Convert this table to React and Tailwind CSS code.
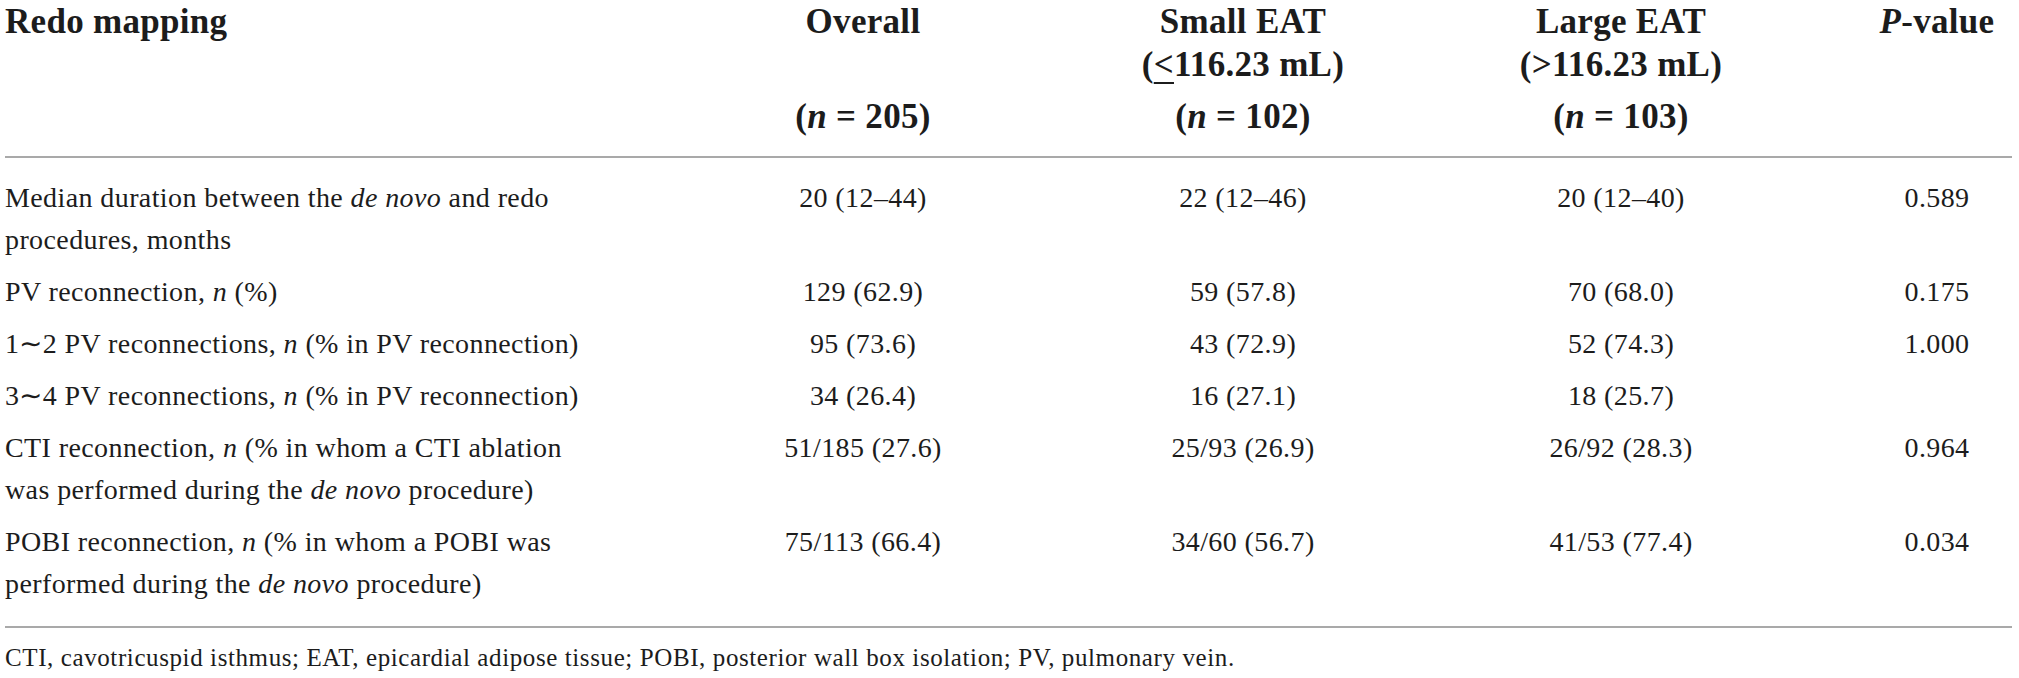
import React from 'react';

const COLS = 'grid grid-cols-[668px_380px_380px_376px_203px]';

const ROWS = [
  {
    label: (
      <>
        Median duration between the <i>de novo</i> and redo procedures, months
      </>
    ),
    values: ['20 (12–44)', '22 (12–46)', '20 (12–40)', '0.589'],
  },
  {
    label: (
      <>
        PV reconnection, <i>n</i> (%)
      </>
    ),
    values: ['129 (62.9)', '59 (57.8)', '70 (68.0)', '0.175'],
  },
  {
    label: (
      <>
        1∼2 PV reconnections, <i>n</i> (% in PV reconnection)
      </>
    ),
    values: ['95 (73.6)', '43 (72.9)', '52 (74.3)', '1.000'],
  },
  {
    label: (
      <>
        3∼4 PV reconnections, <i>n</i> (% in PV reconnection)
      </>
    ),
    values: ['34 (26.4)', '16 (27.1)', '18 (25.7)', ''],
  },
  {
    label: (
      <>
        CTI reconnection, <i>n</i> (% in whom a CTI ablation was performed during the <i>de novo</i> procedure)
      </>
    ),
    values: ['51/185 (27.6)', '25/93 (26.9)', '26/92 (28.3)', '0.964'],
  },
  {
    label: (
      <>
        POBI reconnection, <i>n</i> (% in whom a POBI was performed during the <i>de novo</i> procedure)
      </>
    ),
    values: ['75/113 (66.4)', '34/60 (56.7)', '41/53 (77.4)', '0.034'],
  },
];

function HeadCell({ top, mid, bottom, className = '' }) {
  return (
    <div className={`text-center ${className}`}>
      <div className="h-[43px]">{top}</div>
      <div className="h-[43px]">{mid}</div>
      <div className="mt-[9px] h-[43px]">{bottom}</div>
    </div>
  );
}

export default function App() {
  return (
    <div className="w-[2019px] h-[678px] overflow-hidden bg-white text-[#1c1c1c] font-['Liberation_Serif','Times_New_Roman',serif]">
      <div className="ml-[5px] w-[2007px]">
        {/* Header */}
        <div className={`${COLS} text-[35px] leading-[43px] font-bold tracking-[0.3px] pb-[18px]`}>
          <div className="text-left">Redo mapping</div>
          <HeadCell
            top="Overall"
            bottom={
              <>
                (<i>n</i> = 205)
              </>
            }
          />
          <HeadCell
            top="Small EAT"
            mid={
              <>
                (<span className="underline decoration-2 underline-offset-[6px]">&lt;</span>116.23 mL)
              </>
            }
            bottom={
              <>
                (<i>n</i> = 102)
              </>
            }
          />
          <HeadCell
            top="Large EAT"
            mid="(>116.23 mL)"
            bottom={
              <>
                (<i>n</i> = 103)
              </>
            }
          />
          <div className="pl-[53px] text-center">
            <i>P</i>-value
          </div>
        </div>

        <div className="h-[2px] bg-[#a9a9a9]" />

        {/* Body */}
        <div className="pt-[14px] pb-[16px] text-[28px] leading-[42px] tracking-[0.4px]">
          {ROWS.map((row, i) => (
            <div key={i} className={`${COLS} py-[5px]`}>
              <div className="max-w-[590px] text-left">{row.label}</div>
              <div className="text-center">{row.values[0]}</div>
              <div className="text-center">{row.values[1]}</div>
              <div className="text-center">{row.values[2]}</div>
              <div className="pl-[53px] text-center">{row.values[3]}</div>
            </div>
          ))}
        </div>

        <div className="h-[2px] bg-[#a9a9a9]" />

        {/* Footnote */}
        <p className="pt-[12px] text-[25px] leading-[36px] tracking-[0.6px]">
          CTI, cavotricuspid isthmus; EAT, epicardial adipose tissue; POBI, posterior wall box isolation; PV, pulmonary vein.
        </p>
      </div>
    </div>
  );
}
